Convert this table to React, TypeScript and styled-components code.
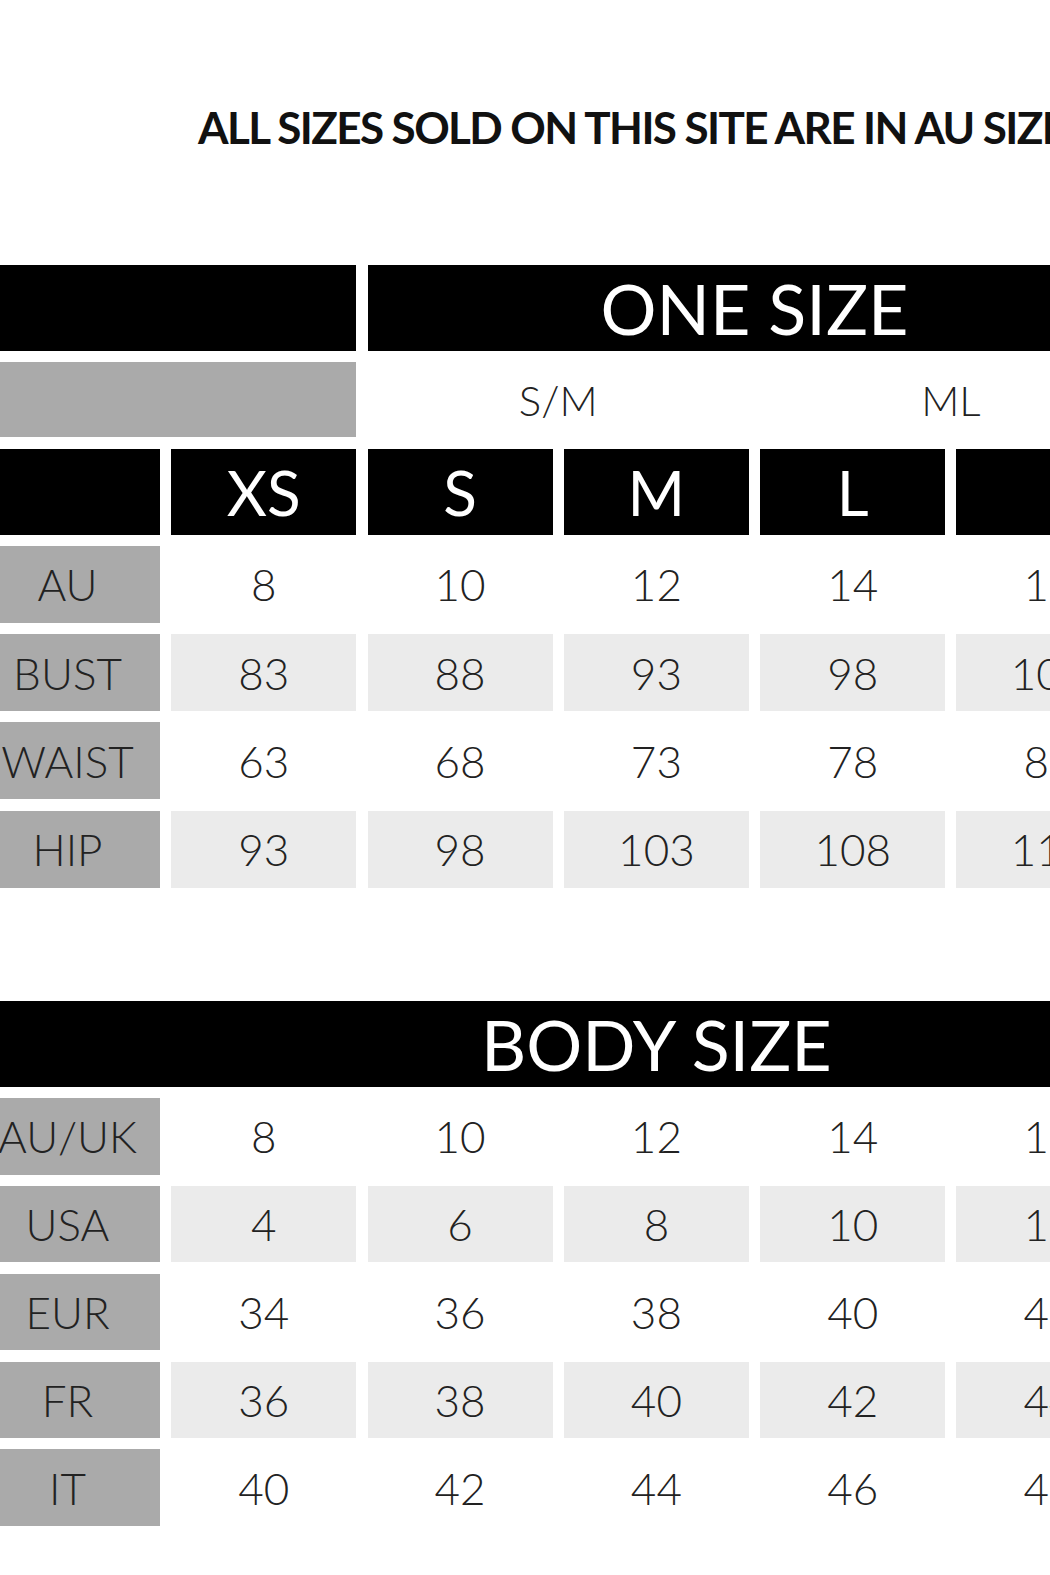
import React from "react";
import styled, { createGlobalStyle } from "styled-components";

const GlobalStyle = createGlobalStyle`
  html, body {
    margin: 0;
    padding: 0;
    background: #ffffff;
    overflow: hidden;
  }
  body {
    font-family: Lato, "Open Sans", "Liberation Sans", sans-serif;
  }
`;

const COL = 185;
const GAP = 11.3;

const Page = styled.div`
  width: 1050px;
  height: 1575px;
  overflow: hidden;
  padding-top: 105px;
  box-sizing: border-box;
`;

const Title = styled.h1`
  margin: 0 0 116px 198px;
  font-family: Lato, "Liberation Sans", sans-serif;
  font-weight: 700;
  font-size: 44px;
  line-height: 44px;
  letter-spacing: -1.6px;
  color: #111111;
  white-space: nowrap;
`;

const Chart = styled.div<{ $rowHeight: number; $rowGap: number }>`
  display: grid;
  grid-template-columns: repeat(7, ${COL}px);
  grid-auto-rows: ${(p) => p.$rowHeight}px;
  column-gap: ${GAP}px;
  row-gap: ${(p) => p.$rowGap}px;
  margin-left: -25px;
  width: max-content;
`;

const BodyChart = styled(Chart)`
  margin-top: 113px;
`;

const Cell = styled.div<{ $span?: number; $tone?: "black" | "grey" | "light" | "white" }>`
  grid-column: span ${(p) => p.$span ?? 1};
  display: flex;
  align-items: center;
  justify-content: center;
  background: ${(p) =>
    p.$tone === "black"
      ? "#000000"
      : p.$tone === "grey"
      ? "#aaaaaa"
      : p.$tone === "light"
      ? "#ebebeb"
      : "#ffffff"};
  color: ${(p) => (p.$tone === "black" ? "#ffffff" : "#222222")};
  font-weight: 300;
  font-size: 44px;
  line-height: 1;
  white-space: nowrap;
  overflow: hidden;
`;

const Banner = styled(Cell)`
  font-size: 70px;
  font-weight: 400;
`;

const SizeHead = styled(Cell)`
  font-size: 62px;
  font-weight: 400;
`;

const Group = styled(Cell)`
  font-size: 42px;
`;

const sizes = ["XS", "S", "M", "L", "", ""];

const measures: [string, string[]][] = [
  ["AU", ["8", "10", "12", "14", "16", "18"]],
  ["BUST", ["83", "88", "93", "98", "103", "108"]],
  ["WAIST", ["63", "68", "73", "78", "83", "88"]],
  ["HIP", ["93", "98", "103", "108", "113", "118"]],
];

const conversions: [string, string[]][] = [
  ["AU/UK", ["8", "10", "12", "14", "16", "18"]],
  ["USA", ["4", "6", "8", "10", "12", "14"]],
  ["EUR", ["34", "36", "38", "40", "42", "44"]],
  ["FR", ["36", "38", "40", "42", "44", "46"]],
  ["IT", ["40", "42", "44", "46", "48", "50"]],
];

const DataRows = ({ rows }: { rows: [string, string[]][] }) => (
  <>
    {rows.map(([label, values], i) => {
      const tone = i % 2 === 1 ? "light" : "white";
      return (
        <React.Fragment key={label}>
          <Cell $tone="grey">{label}</Cell>
          {values.map((v, j) => (
            <Cell key={j} $tone={tone}>
              {v}
            </Cell>
          ))}
        </React.Fragment>
      );
    })}
  </>
);

const App = () => {
  return (
    <Page>
      <GlobalStyle />
      <Title>ALL SIZES SOLD ON THIS SITE ARE IN AU SIZE</Title>

      <Chart $rowHeight={77} $rowGap={11.3} style={{ gridTemplateRows: "86px 75px 86px" }}>
        <Cell $span={2} $tone="black" />
        <Banner $span={4} $tone="black">ONE SIZE</Banner>
        <Cell $tone="black" />

        <Cell $span={2} $tone="grey" />
        <Group $span={2}>S/M</Group>
        <Group $span={2}>ML</Group>
        <Cell />

        <SizeHead $tone="black" />
        {sizes.map((s, i) => (
          <SizeHead key={i} $tone="black">
            {s}
          </SizeHead>
        ))}

        <DataRows rows={measures} />
      </Chart>

      <BodyChart $rowHeight={76.3} $rowGap={11.5} style={{ gridTemplateRows: "86px" }}>
        <Banner $span={7} $tone="black">BODY SIZE</Banner>
        <DataRows rows={conversions} />
      </BodyChart>
    </Page>
  );
};

export default App;
